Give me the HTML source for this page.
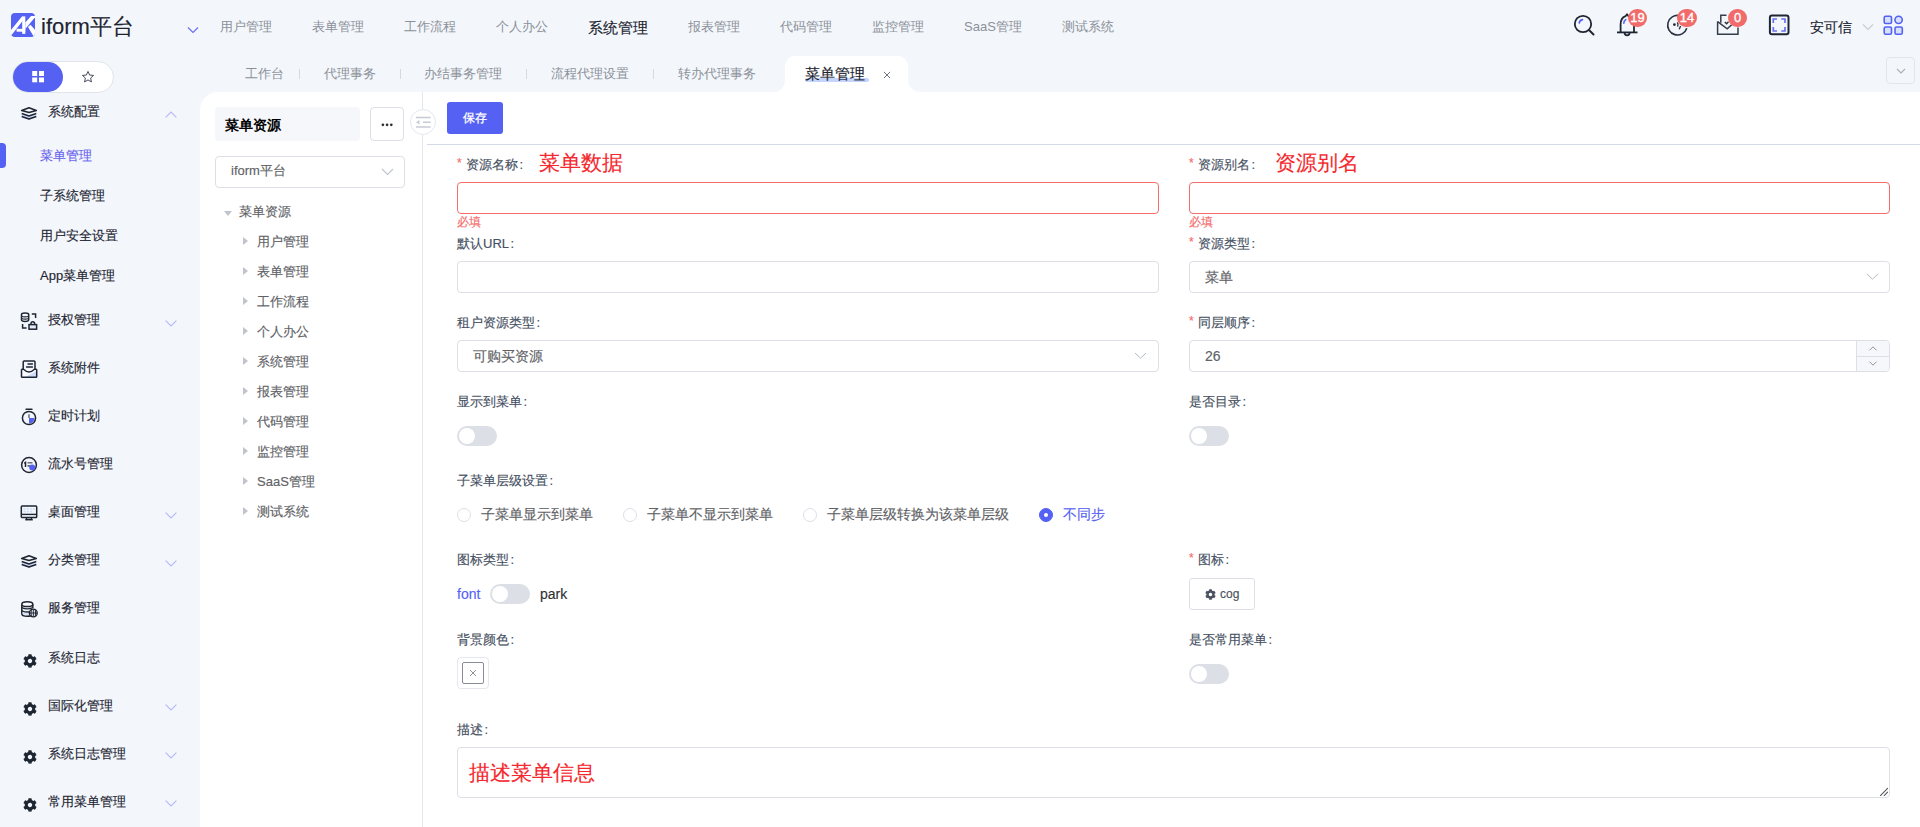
<!DOCTYPE html>
<html><head><meta charset="utf-8">
<style>
*{box-sizing:border-box;margin:0;padding:0}
html,body{width:1920px;height:827px;overflow:hidden}
body{background:#f3f7fb;font-family:"Liberation Sans",sans-serif;position:relative;color:#303133;-webkit-text-stroke:0.15px currentColor}
.a{position:absolute;white-space:nowrap}
.nav{position:absolute;top:18px;font-size:13px;line-height:18px;color:#8b909a;-webkit-text-stroke:0}
.nav.on{font-size:15px;color:#1d2431;top:19px;-webkit-text-stroke:0.15px currentColor}
.tab{position:absolute;top:65px;font-size:13px;line-height:18px;color:#8b909a;-webkit-text-stroke:0}
.sep{position:absolute;top:69px;width:1px;height:10px;background:#d5d9e0}
.mi{position:absolute;left:48px;font-size:13px;line-height:18px;color:#1f2633}
.sub{position:absolute;left:40px;font-size:13px;line-height:18px;color:#1f2633}
.chev{position:absolute;left:165px;width:12px;height:7px}
.tn{position:absolute;font-size:13px;line-height:18px;color:#606266}
.tri{position:absolute;width:0;height:0;border-style:solid}
.lbl{position:absolute;font-size:13px;line-height:18px;color:#465062}
.star{color:#f56c6c;font-size:12px;position:absolute}
.inp{position:absolute;height:32px;border:1px solid #dcdfe6;border-radius:4px;background:#fff}
.sw{position:absolute;width:40px;height:20px;border-radius:10px;background:#dcdfe6}
.sw:after{content:"";position:absolute;left:2px;top:2px;width:16px;height:16px;border-radius:50%;background:#fff}
.radio{position:absolute;top:508px;width:14px;height:14px;border:1px solid #dcdfe6;border-radius:50%;background:#fff}
.rl{position:absolute;top:504px;font-size:14px;line-height:20px;color:#606266}
</style></head><body>

<!-- ============ HEADER ============ -->
<svg class="a" style="left:11px;top:13px" width="24" height="24" viewBox="0 0 24 24">
  <defs><clipPath id="lc"><rect width="24" height="24" rx="4"/></clipPath></defs>
  <rect width="24" height="24" rx="4" fill="#5561f2"/>
  <g clip-path="url(#lc)" fill="#fff">
  <path d="M-1 18.2 L11 3.4 L11.6 3.4 L11.6 8 L-1 24.1 Z"/>
  <rect x="11.2" y="3.4" width="3.1" height="17.5"/>
  <rect x="5.6" y="15.8" width="8.7" height="2.9"/>
  <path d="M14.3 9.6 L20.1 3.1 L24.5 3.1 L24.5 3.6 L14.3 16 Z"/>
  <path d="M17 14 L19.4 11.8 L25 17.8 L25 25 L23.6 25 Z"/>
  </g>
</svg>
<div class="a" style="left:41px;top:13px;font-size:22px;line-height:28px;color:#1d2431">iform平台</div>
<svg class="a" style="left:187px;top:26px" width="12" height="8" viewBox="0 0 12 8"><path d="M1 1.5 L6 6.5 L11 1.5" fill="none" stroke="#6a6ff0" stroke-width="1.2"/></svg>

<div class="nav" style="left:220px">用户管理</div>
<div class="nav" style="left:312px">表单管理</div>
<div class="nav" style="left:404px">工作流程</div>
<div class="nav" style="left:496px">个人办公</div>
<div class="nav on" style="left:588px">系统管理</div>
<div class="nav" style="left:688px">报表管理</div>
<div class="nav" style="left:780px">代码管理</div>
<div class="nav" style="left:872px">监控管理</div>
<div class="nav" style="left:964px">SaaS管理</div>
<div class="nav" style="left:1062px">测试系统</div>

<!-- right header icons -->
<svg class="a" style="left:1572px;top:13px" width="24" height="24" viewBox="0 0 24 24">
  <circle cx="11" cy="11" r="8.2" fill="none" stroke="#1f2633" stroke-width="1.8"/>
  <path d="M17 17 L21.5 21.5" stroke="#1f2633" stroke-width="2" stroke-linecap="round"/>
  <path d="M7.2 10 A4.2 4.2 0 0 1 10.5 6.6" fill="none" stroke="#5561f2" stroke-width="1.6" stroke-linecap="round"/>
</svg>
<svg class="a" style="left:1616px;top:13px" width="24" height="24" viewBox="0 0 24 24">
  <path d="M4.6 19.3 L4.6 11.5 Q4.6 5 9.5 3.2 L11 1.3 L12.5 3.2 Q18 5 18 11.5 L18 19.3" fill="none" stroke="#1f2633" stroke-width="1.8" stroke-linejoin="round"/>
  <path d="M1 19.4 L21.5 19.4" stroke="#1f2633" stroke-width="1.8"/>
  <path d="M8.6 19.8 A2.5 2.5 0 0 0 13.6 19.8" fill="none" stroke="#1f2633" stroke-width="1.8"/>
  <path d="M7.8 10.2 A4 4 0 0 1 9.8 6.6" fill="none" stroke="#5561f2" stroke-width="1.6" stroke-linecap="round"/>
</svg>
<div class="a" style="left:1628px;top:9px;width:19px;height:18px;border-radius:9px;background:#f16b6b;color:#fff;font-size:13px;line-height:18px;text-align:center;-webkit-text-stroke:0.35px #fff">19</div>
<svg class="a" style="left:1665px;top:13px" width="24" height="24" viewBox="0 0 24 24">
  <path d="M14.5 2.6 A9.8 9.8 0 1 0 21.8 15.2" fill="none" stroke="#2a3140" stroke-width="1.6"/>
  <circle cx="9.4" cy="11.6" r="1.35" fill="#1f2633"/>
  <path d="M12.3 9.3 Q13.8 11.3 12.6 13.6" fill="none" stroke="#2a3140" stroke-width="1.4"/>
  <path d="M15.6 13 L14.2 16.2" fill="none" stroke="#2a3140" stroke-width="1.4"/>
</svg>
<div class="a" style="left:1677px;top:9px;width:20px;height:18px;border-radius:9px;background:#f16b6b;color:#fff;font-size:13px;line-height:18px;text-align:center;-webkit-text-stroke:0.35px #fff">14</div>
<svg class="a" style="left:1715px;top:13px" width="24" height="24" viewBox="0 0 24 24">
  <path d="M2.6 8.5 L2.6 21.3 L23 21.3 L23 14.5" fill="none" stroke="#353c4b" stroke-width="1.5"/>
  <path d="M5.8 9.8 L5.8 2.3 L11.5 2.3" fill="none" stroke="#353c4b" stroke-width="1.5"/>
  <path d="M2.6 8.6 L12.2 15.8 L17 11.5" fill="none" stroke="#353c4b" stroke-width="1.5"/>
  <path d="M9.8 9 L11.6 10.8 L13.5 8.8" fill="none" stroke="#2a3140" stroke-width="1.4"/>
</svg>
<div class="a" style="left:1728px;top:9px;width:19px;height:18px;border-radius:9px;background:#f16b6b;color:#fff;font-size:13px;line-height:18px;text-align:center;-webkit-text-stroke:0.35px #fff">0</div>
<svg class="a" style="left:1768px;top:14px" width="22" height="22" viewBox="0 0 22 22">
  <rect x="1.9" y="1.5" width="18.6" height="18.8" rx="2" fill="none" stroke="#1f2633" stroke-width="2"/>
  <path d="M5.3 9 L5.3 5 L9 5 M13.3 5 L17 5 L17 9 M17 13 L17 17 L13.3 17 M9 17 L5.3 17 L5.3 13" fill="none" stroke="#6b70f5" stroke-width="1.7"/>
</svg>
<div class="a" style="left:1810px;top:17px;font-size:14px;line-height:20px;color:#1d2431">安可信</div>
<svg class="a" style="left:1862px;top:23px" width="12" height="8" viewBox="0 0 12 8"><path d="M1 1.5 L6 6.5 L11 1.5" fill="none" stroke="#c8ccd4" stroke-width="1.1"/></svg>
<svg class="a" style="left:1883px;top:15px" width="21" height="21" viewBox="0 0 21 21">
  <rect x="1.2" y="1.2" width="7.3" height="7.3" rx="1.5" fill="#d6e1fb" stroke="#5561f2" stroke-width="1.6"/>
  <circle cx="15.6" cy="4.85" r="3.65" fill="#d6e1fb" stroke="#5561f2" stroke-width="1.6"/>
  <rect x="1.2" y="12" width="7.3" height="7.3" rx="1.5" fill="#d6e1fb" stroke="#5561f2" stroke-width="1.6"/>
  <rect x="12" y="12" width="7.3" height="7.3" rx="1.5" fill="#d6e1fb" stroke="#5561f2" stroke-width="1.6"/>
</svg>
<div class="a" style="left:1886px;top:57px;width:29px;height:27px;border:1px solid #e2e5ea;border-radius:4px"></div>
<svg class="a" style="left:1896px;top:68px" width="10" height="6" viewBox="0 0 10 6"><path d="M1 1 L5 5 L9 1" fill="none" stroke="#a9aeb8" stroke-width="1.1"/></svg>

<!-- sidebar toggle pill -->
<div class="a" style="left:12px;top:61px;width:102px;height:32px;border-radius:16px;background:#fff;border:1px solid #e1e4ea"></div>
<div class="a" style="left:13px;top:62px;width:50px;height:30px;border-radius:15px;background:#5561f2"></div>
<svg class="a" style="left:32px;top:71px" width="12" height="12" viewBox="0 0 12 12"><rect x="0.2" y="0" width="5" height="5" fill="#fff"/><rect x="7" y="0" width="5" height="5" fill="#fff"/><rect x="0.2" y="6.5" width="5" height="4.8" fill="#fff"/><rect x="7" y="6.5" width="5" height="4.8" fill="#fff"/></svg>
<svg class="a" style="left:81px;top:70px" width="14" height="14" viewBox="0 0 24 24"><path d="M12 2.5 L14.8 8.6 L21.5 9.3 L16.5 13.8 L17.9 20.4 L12 17 L6.1 20.4 L7.5 13.8 L2.5 9.3 L9.2 8.6 Z" fill="none" stroke="#3a4050" stroke-width="1.6" stroke-linejoin="round"/></svg>

<!-- tabs -->
<div class="tab" style="left:245px">工作台</div>
<div class="sep" style="left:299px"></div>
<div class="tab" style="left:324px">代理事务</div>
<div class="sep" style="left:400px"></div>
<div class="tab" style="left:424px">办结事务管理</div>
<div class="sep" style="left:526px"></div>
<div class="tab" style="left:551px">流程代理设置</div>
<div class="sep" style="left:653px"></div>
<div class="tab" style="left:678px">转办代理事务</div>

<svg class="a" style="left:770px;top:56px" width="150" height="36" viewBox="0 0 150 36">
  <path d="M0 36 A12 12 0 0 0 15 25 L15 10 A10 10 0 0 1 25 0 L128 0 A10 10 0 0 1 138 10 L138 25 A12 12 0 0 0 150 36 Z" fill="#fff"/>
</svg>
<div class="a" style="left:805px;top:78px;width:64px;height:4px;border-radius:2px;background:#c5d4fa"></div>
<div class="a" style="left:805px;top:64px;font-size:15px;line-height:20px;color:#1d2431">菜单管理</div>
<svg class="a" style="left:883px;top:71px" width="8" height="8" viewBox="0 0 8 8"><path d="M0.9 0.9 L7.1 7.1 M7.1 0.9 L0.9 7.1" stroke="#6e7380" stroke-width="1"/></svg>

<!-- ============ MAIN PANEL ============ -->
<div class="a" style="left:200px;top:92px;width:1720px;height:735px;background:#fff;border-top-left-radius:18px"></div>

<!-- sidebar -->
<svg class="a" style="left:20px;top:106px" width="18" height="15" viewBox="0 0 18 15">
<path d="M1.9 8 L9 10.5 L16.1 8 L16.1 10.8 L9 13.2 L1.9 10.8 Z" fill="#cfdcfa"/>
<path d="M9 1.7 L16.3 4.4 L9 6.5 L1.7 4.4 Z" fill="none" stroke="#1f2633" stroke-width="1.6" stroke-linejoin="round"/>
<path d="M1.7 7.5 L9 10 L16.3 7.5" fill="none" stroke="#1f2633" stroke-width="1.6" stroke-linejoin="round"/>
<path d="M1.7 10.6 L9 13.1 L16.3 10.6" fill="none" stroke="#1f2633" stroke-width="1.6" stroke-linejoin="round"/>
</svg>
<div class="mi" style="top:103px">系统配置</div>
<svg class="chev" style="top:111px" viewBox="0 0 12 7"><path d="M0.6 6.4 L6 1 L11.4 6.4" fill="none" stroke="#b7baf6" stroke-width="1.2"/></svg>
<div class="a" style="left:-3px;top:143px;width:9px;height:25px;border-radius:4px;background:#5561f2"></div>
<div class="sub" style="top:147px;color:#6a64f0">菜单管理</div>
<div class="sub" style="top:187px">子系统管理</div>
<div class="sub" style="top:227px">用户安全设置</div>
<div class="sub" style="top:267px">App菜单管理</div>

<svg class="a" style="left:20px;top:312px" width="18" height="18" viewBox="0 0 18 18">
<path d="M1.5 2.6 Q1.5 1 5.1 1 Q8.7 1 8.7 2.6 L8.7 7.8 Q8.7 9.5 5.1 9.5 Q1.5 9.5 1.5 7.8 Z" fill="none" stroke="#1f2633" stroke-width="1.5"/>
<path d="M1.6 4.3 Q5.1 5.6 8.6 4.3 M1.6 6.5 Q5.1 7.8 8.6 6.5" fill="none" stroke="#1f2633" stroke-width="1.2"/>
<path d="M11.8 1.9 L15.6 1.9 L15.6 6" fill="none" stroke="#1f2633" stroke-width="1.5"/>
<path d="M2.6 12 L2.6 16 L6.6 16" fill="none" stroke="#1f2633" stroke-width="1.5"/>
<rect x="9" y="12.6" width="7.6" height="4.6" fill="#e5ecfc" stroke="#1f2633" stroke-width="1.5"/>
<path d="M11 12.4 L11 11.5 A1.8 1.8 0 0 1 14.6 11.5 L14.6 12.4" fill="none" stroke="#1f2633" stroke-width="1.5"/>
</svg>
<div class="mi" style="top:311px">授权管理</div>
<svg class="chev" style="top:320px" viewBox="0 0 12 7"><path d="M0.6 0.6 L6 5.9 L11.4 0.6" fill="none" stroke="#b7baf6" stroke-width="1.2"/></svg>

<svg class="a" style="left:20px;top:360px" width="18" height="18" viewBox="0 0 18 18">
<path d="M3.2 9.2 L3.2 2 Q3.2 1 4.2 1 L14 1 Q15 1 15 2 L15 9.2" fill="none" stroke="#1f2633" stroke-width="1.5"/>
<path d="M8 4 L12.5 4 M6.5 7 L12.5 7" stroke="#1f2633" stroke-width="1.3" stroke-linecap="round"/>
<path d="M1.5 9.2 L1.5 16.5 Q1.5 17.3 2.3 17.3 L15.9 17.3 Q16.7 17.3 16.7 16.5 L16.7 9.2 Z" fill="#f9fbff"/>
<path d="M5 17 L16.5 11 L16.5 17 Z" fill="#cfdcfa"/>
<path d="M1.5 9.2 L1.5 16.5 Q1.5 17.3 2.3 17.3 L15.9 17.3 Q16.7 17.3 16.7 16.5 L16.7 9.2 M1.5 9.2 L3.5 9.2 Q6.5 12 9 12 Q11.5 12 14.5 9.2 L16.7 9.2" fill="none" stroke="#1f2633" stroke-width="1.5"/>
</svg>
<div class="mi" style="top:359px">系统附件</div>

<svg class="a" style="left:20px;top:408px" width="18" height="18" viewBox="0 0 18 18">
<path d="M6 1.2 L12 1.2" stroke="#1f2633" stroke-width="1.4" stroke-linecap="round"/>
<path d="M9 10 L9 6 M9 10 L15 15 A6.5 6.5 0 0 0 9 3.5" fill="none"/>
<path d="M9 10 L14.5 10 A5.5 5.5 0 0 1 9 15.5 Z" fill="#5561f2"/>
<circle cx="9" cy="10" r="6.6" fill="none" stroke="#1f2633" stroke-width="1.5"/>
<path d="M9 10 L9 6.3" stroke="#5c6270" stroke-width="1.4"/>
</svg>
<div class="mi" style="top:407px">定时计划</div>

<svg class="a" style="left:20px;top:456px" width="18" height="18" viewBox="0 0 18 18">
<circle cx="9" cy="9" r="7.4" fill="none" stroke="#1f2633" stroke-width="1.5"/>
<path d="M4.2 7.3 L5.5 6.4 L5.5 11" fill="none" stroke="#1f2633" stroke-width="1.5"/>
<path d="M7.5 6.8 L12.5 6.8" stroke="#5c6270" stroke-width="1.4"/>
<path d="M7.5 9.9 L11 9.9" stroke="#1f2633" stroke-width="1.2"/>
<circle cx="12.2" cy="11.6" r="3" fill="#5561f2"/>
</svg>
<div class="mi" style="top:455px">流水号管理</div>

<svg class="a" style="left:20px;top:504px" width="18" height="18" viewBox="0 0 18 18">
<rect x="1.3" y="2.1" width="15.4" height="11.4" rx="0.8" fill="none" stroke="#1f2633" stroke-width="1.5"/>
<path d="M1.5 10.4 L16.5 10.4" stroke="#1f2633" stroke-width="1.4"/>
<g fill="#cfdcfa"><rect x="3.5" y="4.2" width="2" height="1.6"/><rect x="6.8" y="4.2" width="2" height="1.6"/><rect x="10.2" y="4.2" width="2" height="1.6"/><rect x="13" y="4.2" width="1.8" height="1.6"/><rect x="3.5" y="6.8" width="2" height="1.6"/><rect x="6.8" y="6.8" width="2" height="1.6"/><rect x="10.2" y="6.8" width="2" height="1.6"/></g>
<path d="M6.5 13.6 L6.5 15.4 L11.5 15.4 L11.5 13.6" fill="none" stroke="#1f2633" stroke-width="1.4"/>
<path d="M5.2 15.8 L12.8 15.8" stroke="#1f2633" stroke-width="1.3"/>
</svg>
<div class="mi" style="top:503px">桌面管理</div>
<svg class="chev" style="top:512px" viewBox="0 0 12 7"><path d="M0.6 0.6 L6 5.9 L11.4 0.6" fill="none" stroke="#b7baf6" stroke-width="1.2"/></svg>

<svg class="a" style="left:20px;top:554px" width="18" height="15" viewBox="0 0 18 15">
<path d="M1.9 8 L9 10.5 L16.1 8 L16.1 10.8 L9 13.2 L1.9 10.8 Z" fill="#cfdcfa"/>
<path d="M9 1.7 L16.3 4.4 L9 6.5 L1.7 4.4 Z" fill="none" stroke="#1f2633" stroke-width="1.6" stroke-linejoin="round"/>
<path d="M1.7 7.5 L9 10 L16.3 7.5" fill="none" stroke="#1f2633" stroke-width="1.6" stroke-linejoin="round"/>
<path d="M1.7 10.6 L9 13.1 L16.3 10.6" fill="none" stroke="#1f2633" stroke-width="1.6" stroke-linejoin="round"/>
</svg>
<div class="mi" style="top:551px">分类管理</div>
<svg class="chev" style="top:560px" viewBox="0 0 12 7"><path d="M0.6 0.6 L6 5.9 L11.4 0.6" fill="none" stroke="#b7baf6" stroke-width="1.2"/></svg>

<svg class="a" style="left:20px;top:600px" width="18" height="18" viewBox="0 0 18 18">
<path d="M1.8 4.2 L1.8 13.8 Q1.8 16.3 7.3 16.3 Q9.5 16.3 11 15.8" fill="none" stroke="#1f2633" stroke-width="1.5"/>
<ellipse cx="7.3" cy="4.2" rx="5.5" ry="2.4" fill="#f9fbff" stroke="#1f2633" stroke-width="1.5"/>
<path d="M1.8 7.6 Q7.3 10.2 12.8 7.6 M1.8 10.8 Q5 12.2 9.5 12" fill="none" stroke="#1f2633" stroke-width="1.4"/>
<path d="M2.5 13.5 Q6 15 10 14.6 L10 13 Q6 13.6 2.5 12.5 Z" fill="#cfdcfa"/>
<path d="M12.8 4.2 L12.8 8" stroke="#1f2633" stroke-width="1.5"/>
<circle cx="13.3" cy="13" r="3.9" fill="#f9fbff" stroke="#1f2633" stroke-width="1.4"/>
<path d="M9.5 13 L17.1 13 M13.3 9.1 L13.3 16.9 M11.4 9.7 Q10.6 13 11.4 16.3 M15.2 9.7 Q16 13 15.2 16.3" fill="none" stroke="#1f2633" stroke-width="1"/>
</svg>
<div class="mi" style="top:599px">服务管理</div>

<svg class="a" style="left:23px;top:654px" width="14" height="14" viewBox="0 0 512 512"><path fill="#1f2633" d="M487.4 315.7l-42.6-24.6c4.3-23.2 4.3-47 0-70.2l42.6-24.6c4.9-2.8 7.1-8.6 5.5-14-11.1-35.6-30-67.8-54.7-94.6-3.8-4.1-10-5.1-14.8-2.3L380.8 110c-17.9-15.4-38.5-27.3-60.8-35.1V25.8c0-5.6-3.9-10.5-9.4-11.7-36.7-8.2-74.3-7.8-109.2 0-5.5 1.2-9.4 6.1-9.4 11.7V75c-22.2 7.9-42.8 19.8-60.8 35.1L88.7 85.5c-4.9-2.8-11-1.9-14.8 2.3-24.7 26.7-43.6 58.9-54.7 94.6-1.7 5.4.6 11.2 5.5 14L67.3 221c-4.3 23.2-4.3 47 0 70.2l-42.6 24.6c-4.9 2.8-7.1 8.6-5.5 14 11.1 35.6 30 67.8 54.7 94.6 3.8 4.1 10 5.1 14.8 2.3l42.6-24.6c17.9 15.4 38.5 27.3 60.8 35.1v49.2c0 5.6 3.9 10.5 9.4 11.7 36.7 8.2 74.3 7.8 109.2 0 5.5-1.2 9.4-6.1 9.4-11.7v-49.2c22.2-7.9 42.8-19.8 60.8-35.1l42.6 24.6c4.9 2.8 11 1.9 14.8-2.3 24.7-26.7 43.6-58.9 54.7-94.6 1.5-5.5-.7-11.3-5.6-14.1zM256 336c-44.1 0-80-35.9-80-80s35.9-80 80-80 80 35.9 80 80-35.9 80-80 80z"/></svg>
<div class="mi" style="top:649px">系统日志</div>
<svg class="a" style="left:23px;top:702px" width="14" height="14" viewBox="0 0 512 512"><path fill="#1f2633" d="M487.4 315.7l-42.6-24.6c4.3-23.2 4.3-47 0-70.2l42.6-24.6c4.9-2.8 7.1-8.6 5.5-14-11.1-35.6-30-67.8-54.7-94.6-3.8-4.1-10-5.1-14.8-2.3L380.8 110c-17.9-15.4-38.5-27.3-60.8-35.1V25.8c0-5.6-3.9-10.5-9.4-11.7-36.7-8.2-74.3-7.8-109.2 0-5.5 1.2-9.4 6.1-9.4 11.7V75c-22.2 7.9-42.8 19.8-60.8 35.1L88.7 85.5c-4.9-2.8-11-1.9-14.8 2.3-24.7 26.7-43.6 58.9-54.7 94.6-1.7 5.4.6 11.2 5.5 14L67.3 221c-4.3 23.2-4.3 47 0 70.2l-42.6 24.6c-4.9 2.8-7.1 8.6-5.5 14 11.1 35.6 30 67.8 54.7 94.6 3.8 4.1 10 5.1 14.8 2.3l42.6-24.6c17.9 15.4 38.5 27.3 60.8 35.1v49.2c0 5.6 3.9 10.5 9.4 11.7 36.7 8.2 74.3 7.8 109.2 0 5.5-1.2 9.4-6.1 9.4-11.7v-49.2c22.2-7.9 42.8-19.8 60.8-35.1l42.6 24.6c4.9 2.8 11 1.9 14.8-2.3 24.7-26.7 43.6-58.9 54.7-94.6 1.5-5.5-.7-11.3-5.6-14.1zM256 336c-44.1 0-80-35.9-80-80s35.9-80 80-80 80 35.9 80 80-35.9 80-80 80z"/></svg>
<div class="mi" style="top:697px">国际化管理</div>
<svg class="chev" style="top:704px" viewBox="0 0 12 7"><path d="M0.6 0.6 L6 5.9 L11.4 0.6" fill="none" stroke="#b7baf6" stroke-width="1.2"/></svg>
<svg class="a" style="left:23px;top:750px" width="14" height="14" viewBox="0 0 512 512"><path fill="#1f2633" d="M487.4 315.7l-42.6-24.6c4.3-23.2 4.3-47 0-70.2l42.6-24.6c4.9-2.8 7.1-8.6 5.5-14-11.1-35.6-30-67.8-54.7-94.6-3.8-4.1-10-5.1-14.8-2.3L380.8 110c-17.9-15.4-38.5-27.3-60.8-35.1V25.8c0-5.6-3.9-10.5-9.4-11.7-36.7-8.2-74.3-7.8-109.2 0-5.5 1.2-9.4 6.1-9.4 11.7V75c-22.2 7.9-42.8 19.8-60.8 35.1L88.7 85.5c-4.9-2.8-11-1.9-14.8 2.3-24.7 26.7-43.6 58.9-54.7 94.6-1.7 5.4.6 11.2 5.5 14L67.3 221c-4.3 23.2-4.3 47 0 70.2l-42.6 24.6c-4.9 2.8-7.1 8.6-5.5 14 11.1 35.6 30 67.8 54.7 94.6 3.8 4.1 10 5.1 14.8 2.3l42.6-24.6c17.9 15.4 38.5 27.3 60.8 35.1v49.2c0 5.6 3.9 10.5 9.4 11.7 36.7 8.2 74.3 7.8 109.2 0 5.5-1.2 9.4-6.1 9.4-11.7v-49.2c22.2-7.9 42.8-19.8 60.8-35.1l42.6 24.6c4.9 2.8 11 1.9 14.8-2.3 24.7-26.7 43.6-58.9 54.7-94.6 1.5-5.5-.7-11.3-5.6-14.1zM256 336c-44.1 0-80-35.9-80-80s35.9-80 80-80 80 35.9 80 80-35.9 80-80 80z"/></svg>
<div class="mi" style="top:745px">系统日志管理</div>
<svg class="chev" style="top:752px" viewBox="0 0 12 7"><path d="M0.6 0.6 L6 5.9 L11.4 0.6" fill="none" stroke="#b7baf6" stroke-width="1.2"/></svg>
<svg class="a" style="left:23px;top:798px" width="14" height="14" viewBox="0 0 512 512"><path fill="#1f2633" d="M487.4 315.7l-42.6-24.6c4.3-23.2 4.3-47 0-70.2l42.6-24.6c4.9-2.8 7.1-8.6 5.5-14-11.1-35.6-30-67.8-54.7-94.6-3.8-4.1-10-5.1-14.8-2.3L380.8 110c-17.9-15.4-38.5-27.3-60.8-35.1V25.8c0-5.6-3.9-10.5-9.4-11.7-36.7-8.2-74.3-7.8-109.2 0-5.5 1.2-9.4 6.1-9.4 11.7V75c-22.2 7.9-42.8 19.8-60.8 35.1L88.7 85.5c-4.9-2.8-11-1.9-14.8 2.3-24.7 26.7-43.6 58.9-54.7 94.6-1.7 5.4.6 11.2 5.5 14L67.3 221c-4.3 23.2-4.3 47 0 70.2l-42.6 24.6c-4.9 2.8-7.1 8.6-5.5 14 11.1 35.6 30 67.8 54.7 94.6 3.8 4.1 10 5.1 14.8 2.3l42.6-24.6c17.9 15.4 38.5 27.3 60.8 35.1v49.2c0 5.6 3.9 10.5 9.4 11.7 36.7 8.2 74.3 7.8 109.2 0 5.5-1.2 9.4-6.1 9.4-11.7v-49.2c22.2-7.9 42.8-19.8 60.8-35.1l42.6 24.6c4.9 2.8 11 1.9 14.8-2.3 24.7-26.7 43.6-58.9 54.7-94.6 1.5-5.5-.7-11.3-5.6-14.1zM256 336c-44.1 0-80-35.9-80-80s35.9-80 80-80 80 35.9 80 80-35.9 80-80 80z"/></svg>
<div class="mi" style="top:793px">常用菜单管理</div>
<svg class="chev" style="top:800px" viewBox="0 0 12 7"><path d="M0.6 0.6 L6 5.9 L11.4 0.6" fill="none" stroke="#b7baf6" stroke-width="1.2"/></svg>
<!-- tree panel -->
<div class="a" style="left:215px;top:107px;width:145px;height:34px;border-radius:4px;background:#f5f7fa"></div>
<div class="a" style="left:225px;top:115px;font-size:14px;line-height:20px;font-weight:bold;color:#000;-webkit-text-stroke:0">菜单资源</div>
<div class="a" style="left:370px;top:107px;width:34px;height:34px;border:1px solid #dcdfe6;border-radius:4px;background:#fff"></div>
<svg class="a" style="left:381px;top:123px" width="12" height="4" viewBox="0 0 12 4"><circle cx="1.9" cy="1.8" r="1.35" fill="#303133"/><circle cx="6.1" cy="1.8" r="1.35" fill="#303133"/><circle cx="10.3" cy="1.8" r="1.35" fill="#303133"/></svg>
<div class="a" style="left:422px;top:92px;width:1px;height:735px;background:#e4e7ed"></div>
<div class="a" style="left:410px;top:109px;width:26px;height:26px;border:1px solid #e4e7ed;border-radius:50%;background:#fff"></div>
<svg class="a" style="left:415px;top:115px" width="16" height="14" viewBox="0 0 16 14"><path d="M1 2.6 L15.6 2.6 M8 7.2 L15.6 7.2 M1 12 L15.6 12" stroke="#c6cad2" stroke-width="1.5"/><path d="M1 7.2 L4.4 5 L4.4 9.4 Z" fill="#c6cad2"/></svg>
<div class="inp" style="left:215px;top:156px;width:190px;height:32px"></div>
<div class="a" style="left:231px;top:162px;font-size:13px;line-height:18px;color:#606266">iform平台</div>
<svg class="a" style="left:381px;top:168px" width="13" height="8" viewBox="0 0 13 8"><path d="M1 1 L6.5 6.5 L12 1" fill="none" stroke="#c0c4cc" stroke-width="1.1"/></svg>
<div class="tri" style="left:224px;top:211px;border-width:5px 4px 0 4px;border-color:#c0c4cc transparent transparent transparent"></div>
<div class="tn" style="left:239px;top:203px">菜单资源</div>
<div class="tri" style="left:243px;top:237px;border-width:4px 0 4px 5px;border-color:transparent transparent transparent #c0c4cc"></div>
<div class="tn" style="left:257px;top:233px">用户管理</div>
<div class="tri" style="left:243px;top:267px;border-width:4px 0 4px 5px;border-color:transparent transparent transparent #c0c4cc"></div>
<div class="tn" style="left:257px;top:263px">表单管理</div>
<div class="tri" style="left:243px;top:297px;border-width:4px 0 4px 5px;border-color:transparent transparent transparent #c0c4cc"></div>
<div class="tn" style="left:257px;top:293px">工作流程</div>
<div class="tri" style="left:243px;top:327px;border-width:4px 0 4px 5px;border-color:transparent transparent transparent #c0c4cc"></div>
<div class="tn" style="left:257px;top:323px">个人办公</div>
<div class="tri" style="left:243px;top:357px;border-width:4px 0 4px 5px;border-color:transparent transparent transparent #c0c4cc"></div>
<div class="tn" style="left:257px;top:353px">系统管理</div>
<div class="tri" style="left:243px;top:387px;border-width:4px 0 4px 5px;border-color:transparent transparent transparent #c0c4cc"></div>
<div class="tn" style="left:257px;top:383px">报表管理</div>
<div class="tri" style="left:243px;top:417px;border-width:4px 0 4px 5px;border-color:transparent transparent transparent #c0c4cc"></div>
<div class="tn" style="left:257px;top:413px">代码管理</div>
<div class="tri" style="left:243px;top:447px;border-width:4px 0 4px 5px;border-color:transparent transparent transparent #c0c4cc"></div>
<div class="tn" style="left:257px;top:443px">监控管理</div>
<div class="tri" style="left:243px;top:477px;border-width:4px 0 4px 5px;border-color:transparent transparent transparent #c0c4cc"></div>
<div class="tn" style="left:257px;top:473px">SaaS管理</div>
<div class="tri" style="left:243px;top:507px;border-width:4px 0 4px 5px;border-color:transparent transparent transparent #c0c4cc"></div>
<div class="tn" style="left:257px;top:503px">测试系统</div>
<!-- form -->
<div class="a" style="left:447px;top:102px;width:56px;height:32px;border-radius:3px;background:#5561f2"></div>
<div class="a" style="left:463px;top:109px;font-size:12px;line-height:18px;color:#fff;-webkit-text-stroke:0.3px #fff">保存</div>
<div class="a" style="left:427px;top:144px;width:1493px;height:1px;background:#d3dae6"></div>

<div class="star" style="left:457px;top:155px;line-height:16px">*</div><div class="lbl" style="left:466px;top:156px">资源名称<span style="margin-left:1.5px">:</span></div>

<div class="a" style="left:539px;top:150px;font-size:21px;line-height:26px;color:#f5282d">菜单数据</div>
<div class="inp" style="left:457px;top:182px;width:702px;border-color:#f56c6c"></div>
<div class="a" style="left:457px;top:214px;font-size:12px;line-height:16px;color:#f56c6c">必填</div>

<div class="star" style="left:1189px;top:155px;line-height:16px">*</div><div class="lbl" style="left:1198px;top:156px">资源别名<span style="margin-left:1.5px">:</span></div>

<div class="a" style="left:1275px;top:150px;font-size:21px;line-height:26px;color:#f5282d">资源别名</div>
<div class="inp" style="left:1189px;top:182px;width:701px;border-color:#f56c6c"></div>
<div class="a" style="left:1189px;top:214px;font-size:12px;line-height:16px;color:#f56c6c">必填</div>

<div class="lbl" style="left:457px;top:235px">默认URL<span style="margin-left:1.5px">:</span></div>

<div class="inp" style="left:457px;top:261px;width:702px"></div>

<div class="star" style="left:1189px;top:234px;line-height:16px">*</div><div class="lbl" style="left:1198px;top:235px">资源类型<span style="margin-left:1.5px">:</span></div>

<div class="inp" style="left:1189px;top:261px;width:701px"></div>
<div class="a" style="left:1205px;top:267px;font-size:14px;line-height:20px;color:#606266">菜单</div>
<svg class="a" style="left:1866px;top:273px" width="13" height="8" viewBox="0 0 13 8"><path d="M1 1 L6.5 6.2 L12 1" fill="none" stroke="#b5bac4" stroke-width="1"/></svg>


<div class="lbl" style="left:457px;top:314px">租户资源类型<span style="margin-left:1.5px">:</span></div>

<div class="inp" style="left:457px;top:340px;width:702px"></div>
<div class="a" style="left:473px;top:346px;font-size:14px;line-height:20px;color:#606266">可购买资源</div>
<svg class="a" style="left:1134px;top:352px" width="13" height="8" viewBox="0 0 13 8"><path d="M1 1 L6.5 6.2 L12 1" fill="none" stroke="#b5bac4" stroke-width="1"/></svg>


<div class="star" style="left:1189px;top:313px;line-height:16px">*</div><div class="lbl" style="left:1198px;top:314px">同层顺序<span style="margin-left:1.5px">:</span></div>

<div class="inp" style="left:1189px;top:340px;width:701px"></div>
<div class="a" style="left:1205px;top:346px;font-size:14px;line-height:20px;color:#606266">26</div>
<div class="a" style="left:1856px;top:341px;width:33px;height:30px;background:#f5f7fa;border-left:1px solid #dcdfe6;border-radius:0 3px 3px 0"></div>
<div class="a" style="left:1857px;top:356px;width:32px;height:1px;background:#dcdfe6"></div>
<svg class="a" style="left:1868px;top:345px" width="10" height="7" viewBox="0 0 10 7"><path d="M1.5 5.3 L5 1.8 L8.5 5.3" fill="none" stroke="#8e939c" stroke-width="1"/></svg>
<svg class="a" style="left:1868px;top:360px" width="10" height="7" viewBox="0 0 10 7"><path d="M1.5 1.7 L5 5.2 L8.5 1.7" fill="none" stroke="#8e939c" stroke-width="1"/></svg>

<div class="lbl" style="left:457px;top:393px">显示到菜单<span style="margin-left:1.5px">:</span></div>

<div class="sw" style="left:457px;top:426px"></div>
<div class="lbl" style="left:1189px;top:393px">是否目录<span style="margin-left:1.5px">:</span></div>

<div class="sw" style="left:1189px;top:426px"></div>

<div class="lbl" style="left:457px;top:472px">子菜单层级设置<span style="margin-left:1.5px">:</span></div>

<div class="radio" style="left:457px"></div><div class="rl" style="left:481px">子菜单显示到菜单</div>
<div class="radio" style="left:623px"></div><div class="rl" style="left:647px">子菜单不显示到菜单</div>
<div class="radio" style="left:803px"></div><div class="rl" style="left:827px">子菜单层级转换为该菜单层级</div>
<div class="radio" style="left:1039px;background:#5561f2;border-color:#5561f2"></div>
<div class="a" style="left:1044px;top:513px;width:4px;height:4px;border-radius:50%;background:#fff"></div>
<div class="rl" style="left:1063px;color:#5561f2">不同步</div>

<div class="lbl" style="left:457px;top:551px">图标类型<span style="margin-left:1.5px">:</span></div>

<div class="a" style="left:457px;top:584px;font-size:14px;line-height:20px;color:#5561f2">font</div>
<div class="sw" style="left:490px;top:584px"></div>
<div class="a" style="left:540px;top:584px;font-size:14px;line-height:20px;color:#303133">park</div>

<div class="star" style="left:1189px;top:550px;line-height:16px">*</div><div class="lbl" style="left:1198px;top:551px">图标<span style="margin-left:1.5px">:</span></div>

<div class="a" style="left:1189px;top:578px;width:66px;height:32px;border:1px solid #dcdfe6;border-radius:3px;background:#fff"></div>
<svg class="a" style="left:1205px;top:589px" width="11" height="11" viewBox="0 0 512 512"><path fill="#4b5260" d="M487.4 315.7l-42.6-24.6c4.3-23.2 4.3-47 0-70.2l42.6-24.6c4.9-2.8 7.1-8.6 5.5-14-11.1-35.6-30-67.8-54.7-94.6-3.8-4.1-10-5.1-14.8-2.3L380.8 110c-17.9-15.4-38.5-27.3-60.8-35.1V25.8c0-5.6-3.9-10.5-9.4-11.7-36.7-8.2-74.3-7.8-109.2 0-5.5 1.2-9.4 6.1-9.4 11.7V75c-22.2 7.9-42.8 19.8-60.8 35.1L88.7 85.5c-4.9-2.8-11-1.9-14.8 2.3-24.7 26.7-43.6 58.9-54.7 94.6-1.7 5.4.6 11.2 5.5 14L67.3 221c-4.3 23.2-4.3 47 0 70.2l-42.6 24.6c-4.9 2.8-7.100 8.600-5.500 14 11.100 35.600 30 67.800 54.700 94.600 3.800 4.100 10 5.100 14.800 2.300l42.600-24.600c17.900 15.400 38.500 27.300 60.800 35.100v49.200c0 5.600 3.900 10.500 9.400 11.700 36.700 8.200 74.300 7.800 109.200 0 5.500-1.200 9.400-6.100 9.400-11.700v-49.200c22.200-7.900 42.800-19.800 60.800-35.100l42.600 24.600c4.900 2.800 11 1.900 14.800-2.300 24.700-26.700 43.600-58.900 54.700-94.600 1.500-5.500-.7-11.300-5.600-14.100zM256 336c-44.100 0-80-35.900-80-80s35.900-80 80-80 80 35.900 80 80-35.900 80-80 80z"/></svg>
<div class="a" style="left:1220px;top:586px;font-size:12px;line-height:16px;color:#4b5260">cog</div>

<div class="lbl" style="left:457px;top:631px">背景颜色<span style="margin-left:1.5px">:</span></div>

<div class="a" style="left:457px;top:657px;width:32px;height:32px;border:1px solid #e4e7ed;border-radius:4px;background:#fff"></div>
<div class="a" style="left:462px;top:662px;width:22px;height:22px;border:1px solid #888c94;border-radius:2px"></div>
<svg class="a" style="left:469px;top:669px" width="8" height="8" viewBox="0 0 8 8"><path d="M1 1 L7 7 M7 1 L1 7" stroke="#909399" stroke-width="1"/></svg>

<div class="lbl" style="left:1189px;top:631px">是否常用菜单<span style="margin-left:1.5px">:</span></div>

<div class="sw" style="left:1189px;top:664px"></div>

<div class="lbl" style="left:457px;top:721px">描述<span style="margin-left:1.5px">:</span></div>

<div class="a" style="left:457px;top:747px;width:1433px;height:51px;border:1px solid #dcdfe6;border-radius:4px;background:#fff"></div>
<div class="a" style="left:469px;top:760px;font-size:21px;line-height:26px;color:#f5282d">描述菜单信息</div>
<svg class="a" style="left:1879px;top:787px" width="9" height="9" viewBox="0 0 9 9"><path d="M8.6 1.4 L1.4 8.6 M8.6 5.2 L5.2 8.6" stroke="#54585f" stroke-width="1.1" stroke-linecap="round"/></svg>

</body></html>
